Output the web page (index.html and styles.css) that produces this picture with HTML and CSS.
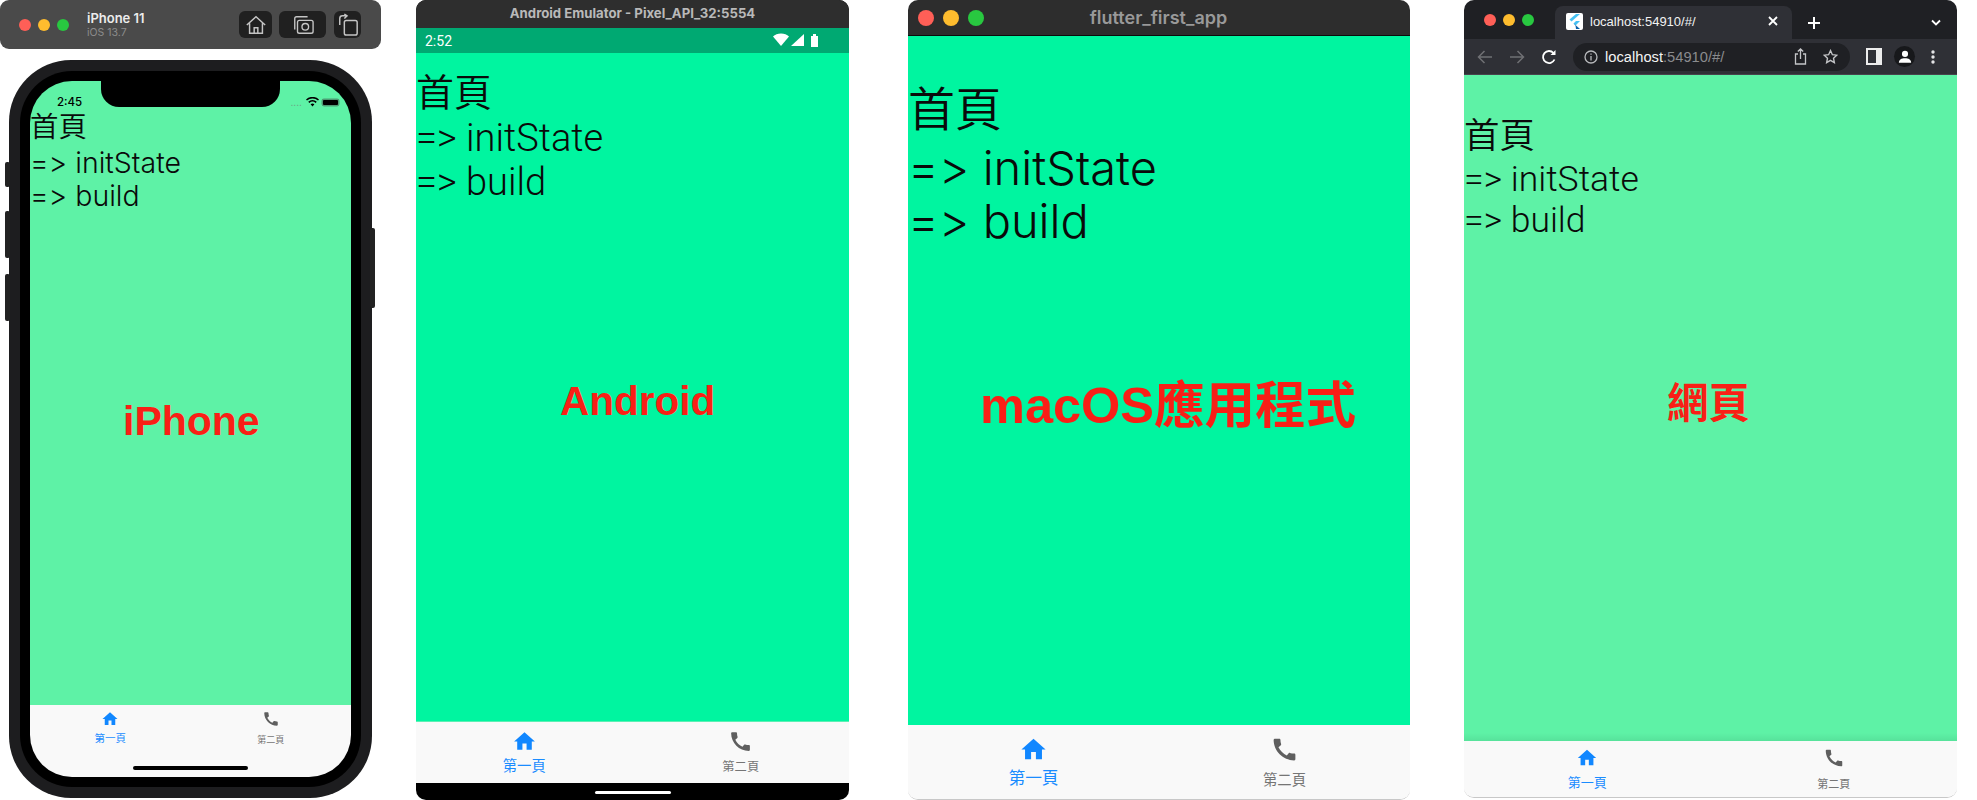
FILE: index.html
```html
<!DOCTYPE html>
<html lang="zh-Hant">
<head>
    <meta charset="UTF-8">
    <title>flutter_first_app</title>
    <link rel="stylesheet" href="styles.css">
</head>
<body>
    <svg class="defs" width="0" height="0">
        <symbol id="i-home" viewBox="0 0 24 24"><path d="M10 20v-6h4v6h5v-8h3L12 3 2 12h3v8z"/></symbol>
        <symbol id="i-call" viewBox="0 0 24 24"><path d="M20.01 15.38c-1.23 0-2.42-.2-3.53-.56-.35-.12-.74-.03-1.01.24l-1.57 1.97c-2.83-1.35-5.48-3.9-6.89-6.83l1.95-1.66c.27-.28.35-.67.24-1.02-.37-1.11-.56-2.3-.56-3.53 0-.54-.45-.99-.99-.99H4.19C3.65 3 3 3.24 3 3.99 3 13.28 10.73 21 20.01 21c.71 0 .99-.63.99-1.18v-3.45c0-.54-.45-.99-.99-.99z"/></symbol>
    </svg>

    <!-- iPhone simulator -->
    <div class="window sim-bar">
        <div class="lights">
            <span class="light red"></span><span class="light yellow"></span><span class="light green"></span>
        </div>
        <div class="sim-name">
            <div class="sim-title">iPhone 11</div>
            <div class="sim-sub">iOS 13.7</div>
        </div>
        <div class="sim-btn btn-home">
            <svg width="22" height="22" viewBox="0 0 24 24" fill="none" stroke="#c4c4c4" stroke-width="1.6"><path d="M2 12 12 3l10 9M5 10v11h14V10M10 21v-6h4v6"/></svg>
        </div>
        <div class="sim-btn btn-shot">
            <svg width="24" height="22" viewBox="0 0 26 24" fill="none" stroke="#c4c4c4" stroke-width="1.5"><path d="M4 17V5a2 2 0 0 1 2-2h12"/><rect x="7" y="7" width="17" height="14" rx="2"/><circle cx="15.5" cy="14" r="3.6"/></svg>
        </div>
        <div class="sim-btn btn-rotate">
            <svg width="22" height="24" viewBox="0 0 24 26" fill="none" stroke="#c4c4c4" stroke-width="1.6"><rect x="8" y="8" width="14" height="16" rx="2"/><path d="M3 13V6a3 3 0 0 1 3-3h5M8 1 11 3 8 6"/></svg>
        </div>
    </div>

    <div class="window phone">
        <span class="side side-1"></span>
        <span class="side side-2"></span>
        <span class="side side-3"></span>
        <span class="side side-4"></span>
        <div class="phone-inner">
            <div class="app phone-screen">
                <div class="screen soft">
                    <div class="ios-status">
                        <span class="ios-time">2:45</span>
                        <span class="ios-icons">
                            <span class="ios-dots">....</span>
                            <svg width="13" height="10" viewBox="0 0 13 10"><path d="M6.5 9.5 4.6 7.3a2.8 2.8 0 0 1 3.8 0zM3.4 6 2.2 4.7a6.4 6.4 0 0 1 8.6 0L9.6 6a4.6 4.6 0 0 0-6.2 0zM1 3.6 0 2.4a9.6 9.6 0 0 1 13 0l-1 1.2a8 8 0 0 0-11 0z"/></svg>
                            <span class="ios-batt"></span>
                        </span>
                    </div>
                    <div class="log">
                        <div class="log-title">首頁</div>
                        <div>=&gt; initState</div>
                        <div>=&gt; build</div>
                    </div>
                    <div class="tag">iPhone</div>
                </div>
                <div class="tabbar">
                    <div class="tab on"><svg class="tab-icon"><use href="#i-home"/></svg><span class="tab-label">第一頁</span></div>
                    <div class="tab"><svg class="tab-icon"><use href="#i-call"/></svg><span class="tab-label">第二頁</span></div>
                </div>
                <span class="home-bar"></span>
            </div>
            <div class="notch"></div>
        </div>
    </div>

    <!-- Android -->
    <div class="window app android">
        <div class="android-title">Android Emulator - Pixel_API_32:5554</div>
        <div class="android-status">
            <span class="android-time">2:52</span>
            <svg class="android-icons" width="48" height="15" viewBox="0 0 48 15" fill="#fff">
                <path d="M0 3.5C2 1.6 4.7.5 8 .5s6 1.1 8 3L8 13z"/>
                <path d="M18 13 31 1v12z"/>
                <path d="M38 3h2V1h3v2h2v11h-7z"/>
            </svg>
        </div>
        <div class="screen vivid">
            <div class="log">
                <div class="log-title">首頁</div>
                <div>=&gt; initState</div>
                <div>=&gt; build</div>
            </div>
            <div class="tag">Android</div>
        </div>
        <div class="tabbar">
            <div class="tab on"><svg class="tab-icon"><use href="#i-home"/></svg><span class="tab-label">第一頁</span></div>
            <div class="tab"><svg class="tab-icon"><use href="#i-call"/></svg><span class="tab-label">第二頁</span></div>
        </div>
        <div class="android-nav"><span></span></div>
    </div>

    <!-- macOS -->
    <div class="window app mac">
        <div class="mac-title">
            <div class="lights">
                <span class="light red"></span><span class="light yellow"></span><span class="light green"></span>
            </div>
            <span class="mac-name">flutter_first_app</span>
        </div>
        <div class="screen vivid">
            <div class="log">
                <div class="log-title">首頁</div>
                <div>=&gt; initState</div>
                <div>=&gt; build</div>
            </div>
            <div class="tag">macOS應用程式</div>
        </div>
        <div class="tabbar">
            <div class="tab on"><svg class="tab-icon"><use href="#i-home"/></svg><span class="tab-label">第一頁</span></div>
            <div class="tab"><svg class="tab-icon"><use href="#i-call"/></svg><span class="tab-label">第二頁</span></div>
        </div>
    </div>

    <!-- Chrome -->
    <div class="window app chrome">
        <div class="tabstrip">
            <div class="lights">
                <span class="light red"></span><span class="light yellow"></span><span class="light green"></span>
            </div>
            <div class="browser-tab">
                <span class="favicon">
                    <svg width="13" height="15" viewBox="0 0 13 15"><path d="M8 0h4L3.5 7.5l-2-2z" fill="#45c0f2"/><path d="M8 7h4L7.5 11.5l-2-2z" fill="#45c0f2"/><path d="M5.5 9.5l2 2L8 15h4L7.5 11z" fill="#0b5fa8"/></svg>
                </span>
                <span class="tab-url">localhost:54910/#/</span>
                <svg width="12" height="12" viewBox="0 0 12 12" stroke="#fff" stroke-width="1.8"><path d="M2 2l8 8M10 2l-8 8"/></svg>
            </div>
            <svg class="new-tab" width="14" height="14" viewBox="0 0 14 14" stroke="#fff" stroke-width="2"><path d="M7 1v12M1 7h12"/></svg>
            <svg class="tab-menu" width="12" height="8" viewBox="0 0 12 8" fill="none" stroke="#fff" stroke-width="1.8"><path d="M2 1.5l4 4 4-4"/></svg>
        </div>
        <div class="toolbar">
            <svg width="16" height="14" viewBox="0 0 16 14" fill="none" stroke="#6f7074" stroke-width="1.5"><path d="M15 7H2M7.5 1 1.5 7l6 6"/></svg>
            <svg width="16" height="14" viewBox="0 0 16 14" fill="none" stroke="#6f7074" stroke-width="1.5"><path d="M1 7h13M8.5 1l6 6-6 6"/></svg>
            <svg width="16" height="16" viewBox="0 0 16 16" fill="none" stroke="#fff" stroke-width="1.8"><path d="M13.5 10.5A6 6 0 1 1 12.5 4"/><path d="M14.5 1v5h-5z" fill="#fff" stroke="none"/></svg>
            <div class="omnibox">
                <svg width="14" height="14" viewBox="0 0 14 14" fill="none" stroke="#b8b9bc" stroke-width="1.3"><circle cx="7" cy="7" r="6"/><path d="M7 6v4.5M7 3.5v1.3"/></svg>
                <span class="url"><b>localhost</b>:54910/#/</span>
                <svg class="share" width="13" height="17" viewBox="0 0 13 17" fill="none" stroke="#c4c5c8" stroke-width="1.3"><path d="M4 6H1.5v10h10V6H9M6.5 11V1M3.8 3.5 6.5 1l2.7 2.5"/></svg>
                <svg width="15" height="15" viewBox="0 0 24 24" fill="none" stroke="#c4c5c8" stroke-width="2.2"><path d="M12 2.5l3 6.600 7 .8-5.200 4.800 1.400 7L12 18.200l-6.200 3.500 1.400-7L2 9.900l7-.8z"/></svg>
            </div>
            <span class="sidepanel"></span>
            <span class="profile">
                <svg width="14" height="13" viewBox="0 0 16 14" fill="#fff"><circle cx="8" cy="4" r="3.5"/><path d="M1 14c0-3.500 3-5 7-5s7 1.500 7 5z"/></svg>
            </span>
            <svg width="4" height="14" viewBox="0 0 4 14" fill="#e4e4e6"><circle cx="2" cy="2" r="1.7"/><circle cx="2" cy="7" r="1.7"/><circle cx="2" cy="12" r="1.7"/></svg>
        </div>
        <div class="screen soft">
            <div class="log">
                <div class="log-title">首頁</div>
                <div>=&gt; initState</div>
                <div>=&gt; build</div>
            </div>
            <div class="tag">網頁</div>
        </div>
        <div class="tabbar">
            <div class="tab on"><svg class="tab-icon"><use href="#i-home"/></svg><span class="tab-label">第一頁</span></div>
            <div class="tab"><svg class="tab-icon"><use href="#i-call"/></svg><span class="tab-label">第二頁</span></div>
        </div>
    </div>
</body>
</html>
```

FILE: styles.css
```css
body {
    margin: 0;
    height: 800px;
    overflow: hidden;
    position: relative;
    background: #fff;
    font-family: Inter, "Noto Sans CJK TC", sans-serif;
    color: #000;
}
.defs {
    position: absolute;
}
.window {
    position: absolute;
    box-sizing: border-box;
}

/* shared app parts */
.app {
    display: flex;
    flex-direction: column;
    overflow: hidden;
}
.screen {
    flex: 1;
    position: relative;
    min-height: 0;
}
.soft {
    background: #5ef2a6;
}
.vivid {
    background: #00f5a0;
}
.log {
    color: #0a0a0a;
    font-weight: 350;
    font-variant-ligatures: none;
    font-feature-settings: "calt" 0;
}
.tag {
    position: absolute;
    color: #f91f16;
    font-family: "Liberation Sans", "Noto Sans CJK TC", sans-serif;
    font-weight: bold;
    white-space: nowrap;
    line-height: 1.2;
}
.tabbar {
    display: flex;
    background: #f9f9f9;
    flex-shrink: 0;
}
.tab {
    flex: 1;
    display: flex;
    flex-direction: column;
    align-items: center;
    color: #757575;
}
.tab.on {
    color: #1a8cff;
}
.tab-icon {
    display: block;
    fill: #5f5f5f;
}
.tab.on .tab-icon {
    fill: #1187ff;
}
.tab-label {
    font-family: "Noto Sans CJK TC", sans-serif;
    white-space: nowrap;
    line-height: 1;
}
.lights {
    display: flex;
}
.light {
    display: block;
    border-radius: 50%;
}
.red {
    background: #ff5f57;
}
.yellow {
    background: #febc2e;
}
.green {
    background: #28c840;
}

/* simulator bar */
.sim-bar {
    left: 0;
    top: 0;
    width: 381px;
    height: 49px;
    background: #4a4a4a;
    border-radius: 9px;
    display: flex;
    align-items: center;
    padding-left: 19px;
}
.sim-bar .lights {
    gap: 7px;
}
.sim-bar .light {
    width: 12px;
    height: 12px;
}
.sim-name {
    margin-left: 18px;
    width: 152px;
}
.sim-title {
    color: #ececec;
    font-size: 13px;
    font-weight: 600;
    line-height: 15px;
}
.sim-sub {
    color: #8c8c8c;
    font-size: 10.5px;
    line-height: 13px;
}
.sim-btn {
    height: 27px;
    background: #202020;
    border-radius: 6px;
    display: flex;
    align-items: center;
    justify-content: center;
}
.btn-home {
    width: 33px;
}
.btn-shot {
    width: 47px;
    margin-left: 7px;
}
.btn-rotate {
    width: 27px;
    margin-left: 8px;
}

/* iPhone */
.phone {
    left: 9px;
    top: 60px;
    width: 363px;
    height: 738px;
    padding: 11px;
    background: #1d1d1f;
    border-radius: 62px;
}
.side {
    position: absolute;
    background: #222;
    border-radius: 2px;
    width: 5px;
}
.side-1 {
    left: -4px;
    top: 102px;
    height: 25px;
}
.side-2 {
    left: -4px;
    top: 151px;
    height: 47px;
}
.side-3 {
    left: -4px;
    top: 214px;
    height: 47px;
}
.side-4 {
    right: -3px;
    top: 168px;
    height: 80px;
}
.phone-inner {
    position: relative;
    height: 100%;
    box-sizing: border-box;
    padding: 10px;
    background: #000;
    border-radius: 52px;
}
.phone-screen {
    position: relative;
    height: 100%;
    border-radius: 42px;
}
.notch {
    position: absolute;
    left: 81px;
    top: 10px;
    width: 179px;
    height: 26px;
    background: #000;
    border-radius: 0 0 18px 18px;
}
.ios-status {
    height: 27px;
    display: flex;
    align-items: flex-end;
    justify-content: space-between;
    padding: 0 13px 0 27px;
    box-sizing: border-box;
}
.ios-time {
    font-size: 11.5px;
    font-weight: 500;
    line-height: 14px;
    margin-bottom: -1px;
}
.ios-icons {
    display: flex;
    align-items: center;
    gap: 4px;
    margin-bottom: 1px;
}
.ios-dots {
    font-size: 10px;
    line-height: 10px;
    color: #6e9e84;
}
.ios-batt {
    width: 15px;
    height: 5px;
    background: #000;
    border-radius: 1px;
    box-shadow: 0 0 0 1.5px #4e9c74;
}
.phone-screen .log {
    font-size: 28.5px;
    line-height: 33px;
}
.phone-screen .log-title {
    line-height: 38px;
    height: 38px;
}
.phone-screen .tag {
    left: 93px;
    top: 316px;
    font-size: 41px;
}
.phone-screen .tabbar {
    height: 72px;
}
.phone-screen .tab {
    padding-top: 5px;
}
.phone-screen .tab-icon {
    width: 18px;
    height: 18px;
}
.phone-screen .tab-label {
    font-size: 9px;
    margin-top: 7px;
}
.phone-screen .tab.on .tab-label {
    font-size: 10.5px;
    margin-top: 5px;
}
.home-bar {
    position: absolute;
    left: 103px;
    bottom: 7px;
    width: 115px;
    height: 4px;
    background: #000;
    border-radius: 2px;
}

/* Android */
.android {
    left: 416px;
    top: 0;
    width: 433px;
    height: 800px;
    border-radius: 10px;
    background: #000;
}
.android-title {
    height: 28px;
    background: #2e2e2e;
    color: #b9b9b9;
    font-size: 13.2px;
    font-weight: 700;
    line-height: 27px;
    text-align: center;
}
.android-status {
    height: 25px;
    background: #00a972;
    display: flex;
    align-items: center;
    justify-content: space-between;
    padding: 0 28px 0 9px;
}
.android-time {
    font-family: Roboto, sans-serif;
    color: #fff;
    font-size: 14px;
}
.android-icons {
    display: block;
}
.android .log {
    font-family: Roboto, "Noto Sans CJK TC", sans-serif;
    font-size: 38px;
    line-height: 44px;
    padding-top: 18px;
}
.android .log-title {
    line-height: 45px;
    height: 45px;
}
.android .tag {
    left: 144px;
    top: 324px;
    font-size: 40.5px;
}
.android .tabbar {
    height: 62px;
    border-top: 1px solid #5cf0b4;
    box-sizing: border-box;
}
.android .tab {
    padding-top: 7px;
}
.android .tab-icon {
    width: 25px;
    height: 25px;
}
.android .tab-label {
    font-size: 12.3px;
    margin-top: 6px;
}
.android .tab.on .tab-label {
    font-size: 14.3px;
    margin-top: 4px;
}
.android-nav {
    height: 17px;
    display: flex;
    justify-content: center;
    padding-top: 8px;
    box-sizing: border-box;
}
.android-nav span {
    display: block;
    width: 76px;
    height: 3px;
    background: #fff;
    border-radius: 2px;
}

/* macOS */
.mac {
    left: 908px;
    top: 0;
    width: 502px;
    height: 800px;
    border-radius: 10px;
    border-bottom: 1px solid #c8c8c8;
}
.mac-title {
    height: 36px;
    flex-shrink: 0;
    background: #2d2d2d;
    border-bottom: 1px solid #0c0c0c;
    box-sizing: border-box;
    display: flex;
    align-items: center;
    justify-content: center;
    position: relative;
}
.mac-title .lights {
    position: absolute;
    left: 10px;
    top: 10px;
    gap: 9px;
}
.mac-title .light {
    width: 16px;
    height: 16px;
}
.mac-name {
    color: #999;
    font-size: 18px;
    font-weight: 600;
    margin-left: -1px;
}
.mac .log {
    font-size: 47px;
    line-height: 53px;
    padding-top: 40px;
}
.mac .log-title {
    line-height: 65px;
    height: 65px;
}
.mac .tag {
    left: 72px;
    top: 340px;
    font-size: 50.5px;
}
.mac .tabbar {
    height: 74px;
}
.mac .tab {
    padding-top: 10px;
}
.mac .tab-icon {
    width: 29px;
    height: 29px;
}
.mac .tab-label {
    font-size: 14.4px;
    margin-top: 8px;
}
.mac .tab.on .tab-label {
    font-size: 16.7px;
    margin-top: 5px;
}

/* Chrome */
.chrome {
    left: 1464px;
    top: 0;
    width: 493px;
    height: 798px;
    border-radius: 10px;
    border-bottom: 1px solid #c8c8c8;
}
.tabstrip {
    height: 39px;
    flex-shrink: 0;
    background: #1f2024;
    display: flex;
    align-items: flex-end;
    position: relative;
}
.tabstrip .lights {
    position: absolute;
    left: 20px;
    top: 14px;
    gap: 7px;
}
.tabstrip .light {
    width: 12px;
    height: 12px;
}
.browser-tab {
    margin-left: 91px;
    width: 237px;
    height: 33px;
    box-sizing: border-box;
    background: #2f3036;
    border-radius: 8px 8px 0 0;
    display: flex;
    align-items: center;
    padding: 0 13px 3px 11px;
}
.favicon {
    width: 17px;
    height: 17px;
    background: #fff;
    display: flex;
    align-items: center;
    justify-content: center;
    border-radius: 2px;
}
.tab-url {
    flex: 1;
    color: #f2f2f2;
    font-family: "Liberation Sans", sans-serif;
    font-size: 13px;
    margin-left: 7px;
}
.new-tab {
    margin: 0 0 9px 15px;
}
.tab-menu {
    margin: 0 15px 12px auto;
}
.toolbar {
    height: 36px;
    flex-shrink: 0;
    box-sizing: border-box;
    background: #2f3036;
    border-bottom: 1px solid #47434c;
    display: flex;
    align-items: center;
    padding-left: 13px;
    gap: 16px;
}
.omnibox {
    width: 277px;
    height: 28px;
    box-sizing: border-box;
    background: #1f2024;
    border-radius: 14px;
    display: flex;
    align-items: center;
    padding: 0 12px 0 11px;
}
.url {
    flex: 1;
    margin-left: 7px;
    color: #8a8b8e;
    font-family: "Liberation Sans", sans-serif;
    font-size: 14.7px;
}
.url b {
    color: #f4f4f4;
    font-weight: 400;
}
.share {
    margin-right: 16px;
}
.sidepanel {
    width: 8px;
    height: 13px;
    border: 2px solid #ededed;
    border-right-width: 6px;
    background: #2f3036;
}
.profile {
    width: 21px;
    height: 21px;
    margin-left: -4px;
    background: #17181b;
    border-radius: 50%;
    display: flex;
    align-items: center;
    justify-content: center;
}
.chrome .log {
    font-size: 35.5px;
    line-height: 41px;
    font-family: Roboto, "Noto Sans CJK TC", sans-serif;
    padding-top: 39px;
}
.chrome .log-title {
    line-height: 45px;
    height: 45px;
}
.chrome .tag {
    left: 203px;
    top: 304px;
    font-size: 41.5px;
}
.chrome .screen::after {
    content: "";
    position: absolute;
    left: 0;
    right: 0;
    bottom: 0;
    height: 8px;
    background: linear-gradient(transparent, #57e29b);
}
.chrome .tabbar {
    height: 56px;
}
.chrome .tab {
    padding-top: 6px;
}
.chrome .tab-icon {
    width: 22px;
    height: 22px;
}
.chrome .tab-label {
    font-size: 11px;
    margin-top: 9px;
}
.chrome .tab.on .tab-label {
    font-size: 13px;
    margin-top: 6px;
}
```
